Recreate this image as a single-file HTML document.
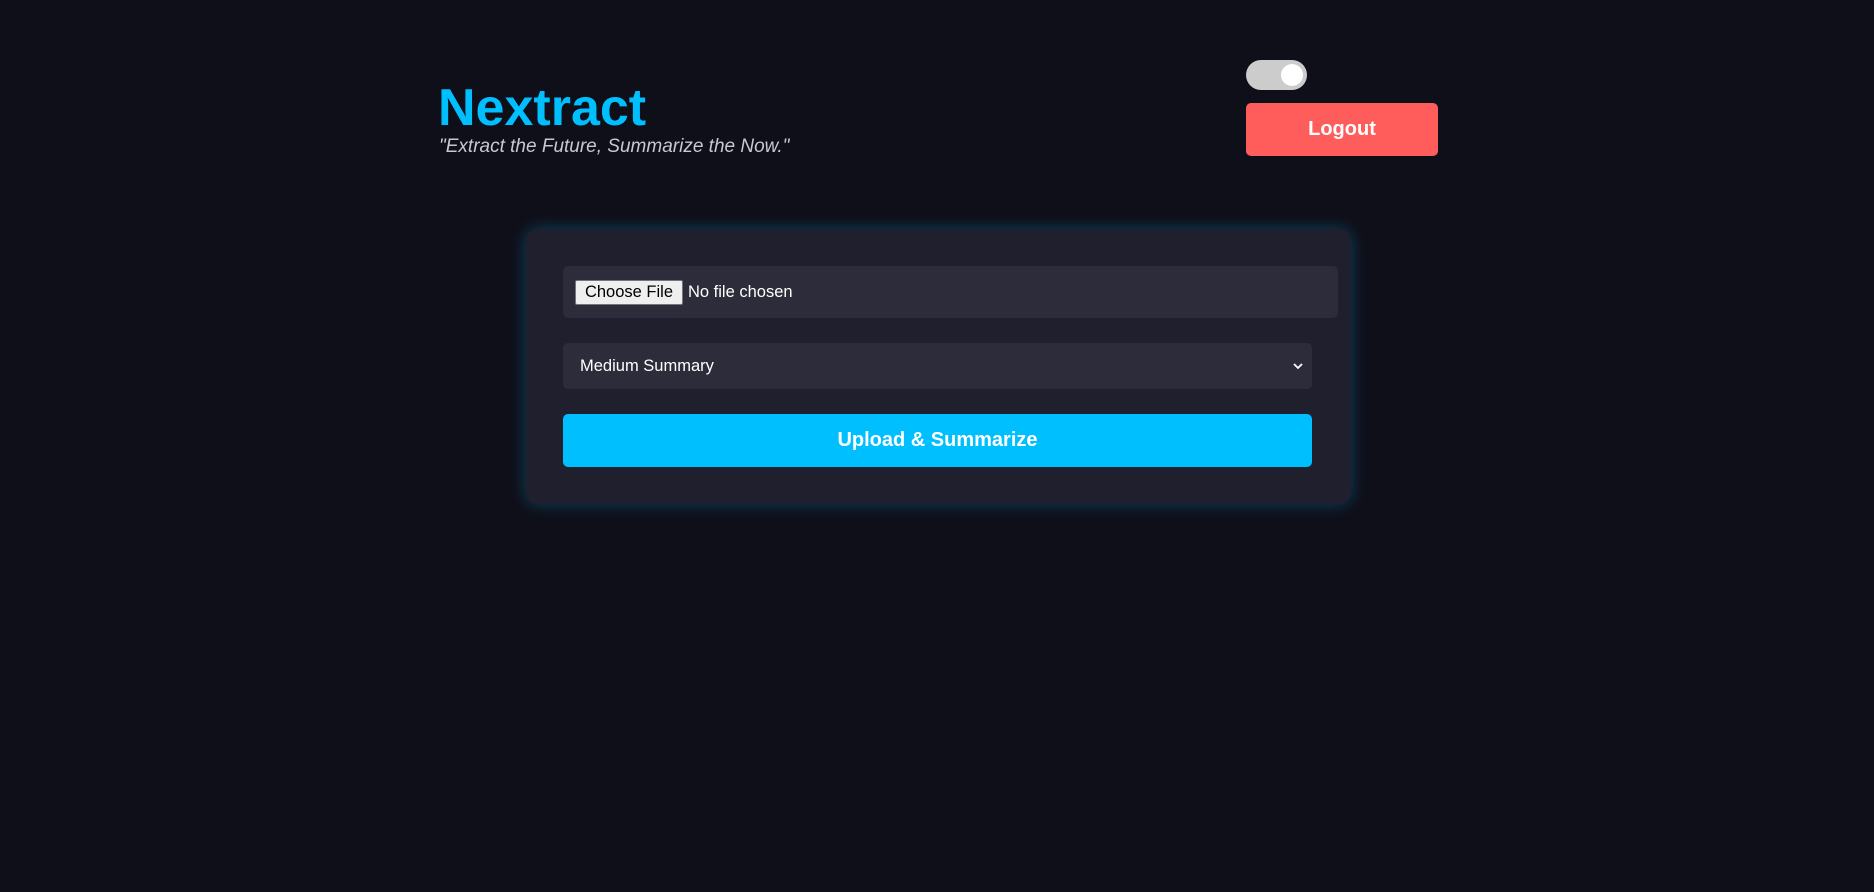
<!DOCTYPE html>
<html><head><style>
*{box-sizing:border-box;margin:0;padding:0}
body{width:1874px;height:892px;background:#0f0f19;font-family:"Liberation Sans",sans-serif;position:relative;overflow:hidden}
.t{position:absolute;left:438px;top:78px;font-size:52px;font-weight:bold;color:#00bfff;line-height:60px}
.s{position:absolute;left:439px;top:136px;font-size:19px;font-style:italic;color:#c8c8d0}
.tog{position:absolute;left:1246px;top:60px;width:61px;height:30px;border-radius:15px;background:#ccc}
.tog i{position:absolute;right:4px;top:4px;width:22px;height:22px;border-radius:50%;background:#fff}
.lo{position:absolute;left:1246px;top:103px;width:192px;height:53px;border-radius:5px;background:#ff5c5c;color:#fff;font-weight:bold;font-size:20px;text-align:center;line-height:53px}
.card{position:absolute;left:526px;top:229px;width:825px;height:275px;background:#1f1f2e;border-radius:12px;box-shadow:0 0 16px rgba(0,191,255,0.3)}
.f{position:absolute;left:563px;top:266px;width:775px;height:52px;background:#2c2c3a;border-radius:5px}
.cb{position:absolute;left:12px;top:14px;height:25px;width:108px;background:#efefef;border:1px solid #767676;border-radius:2px;font-size:16.5px;color:#000;line-height:23px;text-align:center}
.nf{position:absolute;left:125px;top:14px;line-height:25px;font-size:16.5px;color:#fff}
.sel{position:absolute;left:563px;top:343px;width:749px;height:46px;background:#2c2c3a;border-radius:5px;color:#fff;font-size:16.5px;line-height:46px;padding-left:17px}
.sel svg{position:absolute;right:9px;top:19px}
.b{position:absolute;left:563px;top:414px;width:749px;height:53px;background:#00bfff;border-radius:5px;color:#fff;font-weight:bold;font-size:20px;text-align:center;line-height:53px}
</style></head><body>
<div class="t">Nextract</div>
<div class="s">"Extract the Future, Summarize the Now."</div>
<div class="tog"><i></i></div>
<div class="lo">Logout</div>
<div class="card"></div>
<div class="f"><div class="cb">Choose File</div><div class="nf">No file chosen</div></div>
<div class="sel">Medium Summary<svg width="10" height="8" viewBox="0 0 10 8"><path d="M1 2 L5 6 L9 2" stroke="#fff" stroke-width="1.8" fill="none"/></svg></div>
<div class="b">Upload &amp; Summarize</div>
</body></html>
